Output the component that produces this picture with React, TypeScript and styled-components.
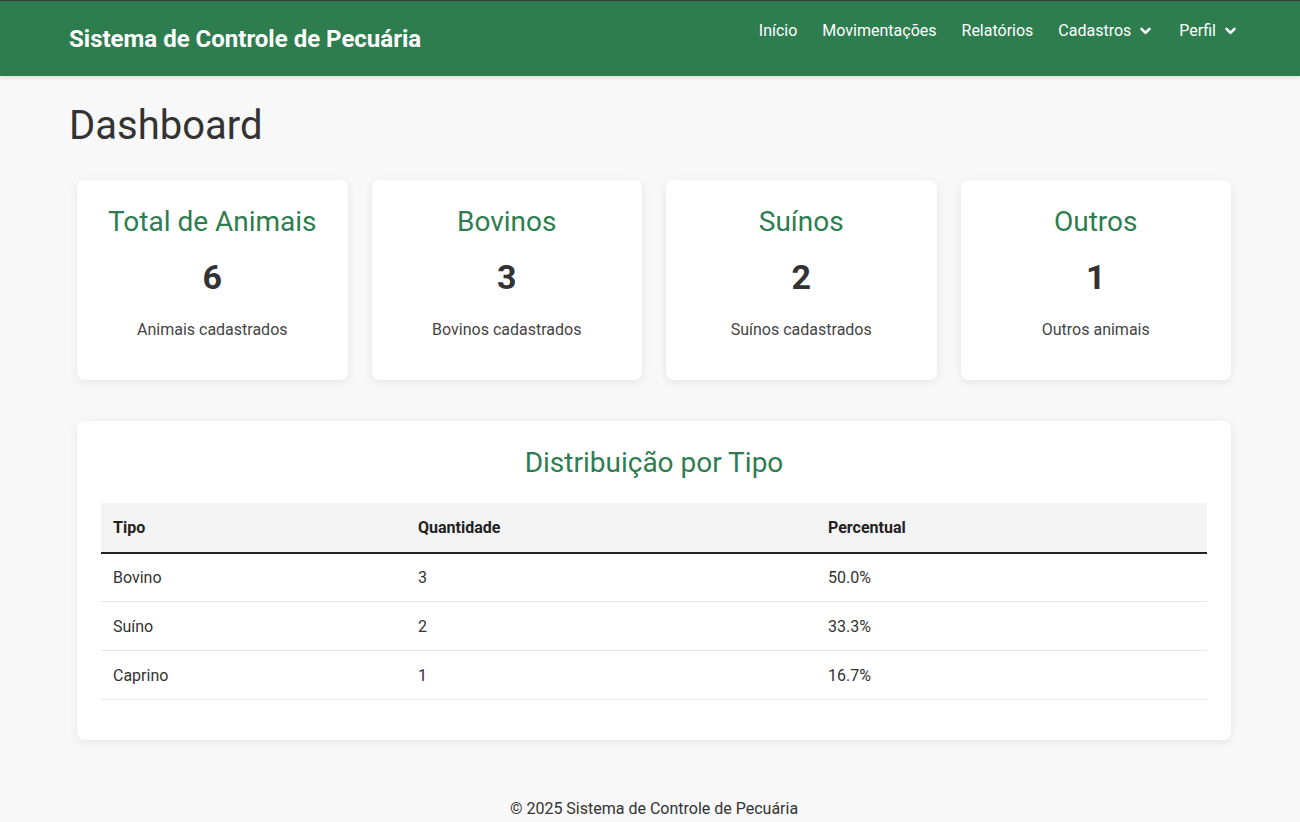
import React from "react";
import styled, { createGlobalStyle } from "styled-components";

const GlobalStyle = createGlobalStyle`
  * { box-sizing: border-box; }
  html, body { margin: 0; padding: 0; }
  body {
    background: #f8f8f8;
    font-family: Roboto, "Liberation Sans", Arial, sans-serif;
    color: #333;
  }
`;

const green = "#2e7d4f";

const Header = styled.header`
  background: ${green};
  border-top: 1px solid #3a3a3a;
  height: 76px;
  box-shadow: 0 2px 4px rgba(0, 0, 0, 0.1);
`;

const HeaderInner = styled.div`
  max-width: 1162px;
  margin: 0 auto;
  height: 100%;
  display: flex;
  justify-content: space-between;
  align-items: flex-start;
`;

const Brand = styled.div`
  align-self: center;
  color: #fff;
  font-size: 24px;
  font-weight: 700;
  line-height: 1.2;
  margin-top: 1px;
`;

const Nav = styled.nav`
  display: flex;
  gap: 25px;
  padding-top: 18px;
  margin-right: -8px;
`;

const NavLink = styled.a`
  display: flex;
  align-items: center;
  gap: 9px;
  color: #fff;
  font-size: 16px;
  font-weight: 400;
  line-height: 24px;
  text-decoration: none;
`;

const Chevron = () => (
  <svg width="14" height="8" viewBox="0 0 14 8" aria-hidden="true">
    <polyline
      points="1.5,1.8 5.5,5.8 9.5,1.8"
      fill="none"
      stroke="#fff"
      strokeWidth="2.6"
      strokeLinecap="round"
      strokeLinejoin="round"
    />
  </svg>
);

const Main = styled.main`
  max-width: 1162px;
  margin: 0 auto;
`;

const PageTitle = styled.h1`
  font-size: 40px;
  font-weight: 400;
  line-height: 1.2;
  color: #333;
  margin: 26px 0 30px;
`;

const Section = styled.div`
  padding-left: 8px;
`;

const CardGrid = styled.div`
  display: grid;
  grid-template-columns: repeat(4, 1fr);
  gap: 24px;
`;

const Card = styled.div`
  background: #fff;
  border-radius: 8px;
  box-shadow: 0 2px 10px rgba(0, 0, 0, 0.08);
  padding: 25px 24px 0;
  height: 200px;
  text-align: center;
`;

const CardTitle = styled.h3`
  margin: 0;
  font-size: 28px;
  font-weight: 400;
  line-height: 1.2;
  color: ${green};
`;

const CardNumber = styled.div`
  font-size: 34px;
  font-weight: 700;
  line-height: 1.2;
  color: #333;
  margin-top: 18px;
`;

const CardText = styled.p`
  margin: 21px 0 0;
  font-size: 16px;
  line-height: 1.5;
  color: #444;
`;

const Panel = styled.div`
  background: #fff;
  border-radius: 8px;
  box-shadow: 0 2px 10px rgba(0, 0, 0, 0.08);
  margin-top: 41px;
  padding: 25px 24px 40px;
`;

const PanelTitle = styled.h2`
  margin: 0 0 23px;
  text-align: center;
  font-size: 28px;
  font-weight: 400;
  line-height: 1.2;
  color: ${green};
`;

const Table = styled.table`
  width: 100%;
  border-collapse: collapse;
  font-size: 16px;
`;

const Th = styled.th<{ $w?: number }>`
  text-align: left;
  background: #f4f4f4;
  font-weight: 700;
  color: #222;
  height: 50px;
  padding: 0 12px;
  border-bottom: 2px solid #222;
  width: ${(p) => (p.$w ? `${p.$w}px` : "auto")};
`;

const Td = styled.td`
  height: 49px;
  padding: 0 12px;
  color: #333;
  border-bottom: 1px solid #e6e6e6;
`;

const Footer = styled.footer`
  padding: 57px 0 4px 8px;
  text-align: center;
  font-size: 16px;
  line-height: 24px;
  color: #333;
`;

const stats = [
  { title: "Total de Animais", value: 6, text: "Animais cadastrados" },
  { title: "Bovinos", value: 3, text: "Bovinos cadastrados" },
  { title: "Suínos", value: 2, text: "Suínos cadastrados" },
  { title: "Outros", value: 1, text: "Outros animais" },
];

const rows = [
  ["Bovino", "3", "50.0%"],
  ["Suíno", "2", "33.3%"],
  ["Caprino", "1", "16.7%"],
];

export default function App() {
  return (
    <>
      <GlobalStyle />
      <Header>
        <HeaderInner>
          <Brand>Sistema de Controle de Pecuária</Brand>
          <Nav>
            <NavLink href="#">Início</NavLink>
            <NavLink href="#">Movimentações</NavLink>
            <NavLink href="#">Relatórios</NavLink>
            <NavLink href="#">
              Cadastros <Chevron />
            </NavLink>
            <NavLink href="#">
              Perfil <Chevron />
            </NavLink>
          </Nav>
        </HeaderInner>
      </Header>
      <Main>
        <PageTitle>Dashboard</PageTitle>
        <Section>
          <CardGrid>
            {stats.map((s) => (
              <Card key={s.title}>
                <CardTitle>{s.title}</CardTitle>
                <CardNumber>{s.value}</CardNumber>
                <CardText>{s.text}</CardText>
              </Card>
            ))}
          </CardGrid>
          <Panel>
            <PanelTitle>Distribuição por Tipo</PanelTitle>
            <Table>
              <thead>
                <tr>
                  <Th $w={305}>Tipo</Th>
                  <Th $w={410}>Quantidade</Th>
                  <Th>Percentual</Th>
                </tr>
              </thead>
              <tbody>
                {rows.map((r) => (
                  <tr key={r[0]}>
                    <Td>{r[0]}</Td>
                    <Td>{r[1]}</Td>
                    <Td>{r[2]}</Td>
                  </tr>
                ))}
              </tbody>
            </Table>
          </Panel>
        </Section>
        <Footer>© 2025 Sistema de Controle de Pecuária</Footer>
      </Main>
    </>
  );
}
